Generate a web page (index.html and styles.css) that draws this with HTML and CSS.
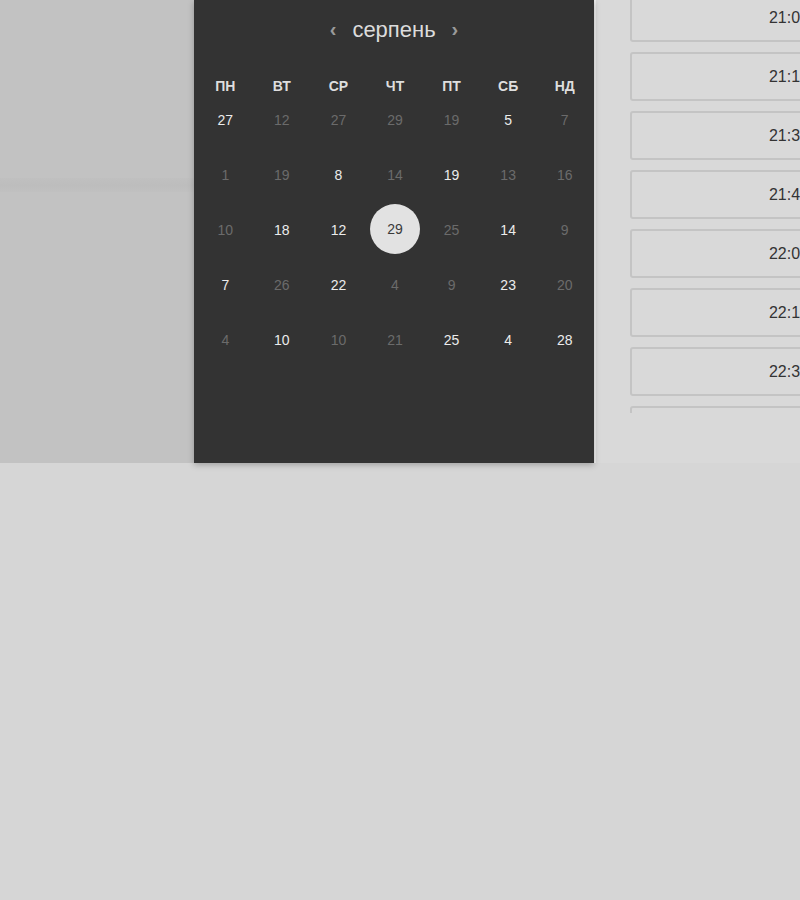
FILE: index.html
```html
<!DOCTYPE html>
<html lang="uk">
<head>
<meta charset="utf-8">
<title>Календар</title>
<link rel="stylesheet" href="styles.css">
</head>
<body>
<div class="top">
  <div class="left"><div class="band"></div></div>
  <div class="calendar">
    <div class="cal-head">
      <span class="chev">‹</span>
      <span class="month">серпень</span>
      <span class="chev">›</span>
    </div>
    <div class="weekdays">
      <span>ПН</span><span>ВТ</span><span>СР</span><span>ЧТ</span><span>ПТ</span><span>СБ</span><span>НД</span>
    </div>
    <div class="dates">
      <span class="on">27</span><span>12</span><span>27</span><span>29</span><span>19</span><span class="on">5</span><span>7</span>
      <span>1</span><span>19</span><span class="on">8</span><span>14</span><span class="on">19</span><span>13</span><span>16</span>
      <span>10</span><span class="on">18</span><span class="on">12</span><span class="sel"><b>29</b></span><span>25</span><span class="on">14</span><span>9</span>
      <span class="on">7</span><span>26</span><span class="on">22</span><span>4</span><span>9</span><span class="on">23</span><span>20</span>
      <span>4</span><span class="on">10</span><span>10</span><span>21</span><span class="on">25</span><span class="on">4</span><span class="on">28</span>
    </div>
  </div>
  <div class="divider"></div>
  <div class="slots-panel">
    <div class="slots">
      <button class="slot">21:00</button>
      <button class="slot">21:15</button>
      <button class="slot">21:30</button>
      <button class="slot">21:45</button>
      <button class="slot">22:00</button>
      <button class="slot">22:15</button>
      <button class="slot">22:30</button>
      <button class="slot">22:45</button>
    </div>
  </div>
</div>
</body>
</html>
```
FILE: styles.css
```css
html, body {
  margin: 0;
  padding: 0;
}
body {
  background: #d6d6d6;
  width: 800px;
  height: 900px;
  overflow: hidden;
  font-family: "Liberation Sans", Arial, sans-serif;
}
.top {
  display: flex;
  height: 463px;
  width: 1000px;
}
.left {
  width: 194px;
  flex: none;
  background: #c2c2c2;
  padding-top: 178px;
  box-sizing: border-box;
}
.band {
  height: 14px;
  background: linear-gradient(#c0c0c0, #bdbdbd 50%, #c0c0c0);
}
.calendar {
  width: 400px;
  flex: none;
  background: #333333;
  box-shadow: 0 2px 6px rgba(0,0,0,0.25);
  position: relative;
  z-index: 1;
}
.cal-head {
  height: 60px;
  display: flex;
  align-items: center;
  justify-content: center;
  gap: 16px;
}
.month {
  color: #dcdcdc;
  font-size: 22px;
}
.chev {
  color: #9a9a9a;
  font-size: 20px;
  font-weight: bold;
  line-height: 1;
  margin-top: -3px;
}
.weekdays {
  display: grid;
  grid-template-columns: repeat(7, 1fr);
  padding: 0 1px 0 3px;
  margin-top: 16px;
  height: 20px;
  align-items: center;
}
.weekdays span {
  text-align: center;
  color: #dedede;
  font-weight: bold;
  font-size: 14px;
}
.dates {
  display: grid;
  grid-template-columns: repeat(7, 1fr);
  grid-auto-rows: 55px;
  padding: 0 1px 0 3px;
  margin-top: -4px;
}
.dates span {
  display: flex;
  align-items: center;
  justify-content: center;
  color: #6b6b6b;
  font-size: 14px;
}
.dates span.on {
  color: #ececec;
}
.dates span.sel b {
  width: 50px;
  height: 50px;
  border-radius: 50%;
  background: #e2e2e2;
  color: #3a3a3a;
  font-weight: normal;
  display: flex;
  align-items: center;
  justify-content: center;
  margin-top: -2px;
}
.divider {
  width: 2px;
  flex: none;
  background: #ececec;
}
.slots-panel {
  flex: 1;
  background: #d9d9d9;
  padding-left: 34px;
  box-sizing: border-box;
}
.slots {
  height: 413px;
  overflow: hidden;
  display: flex;
  flex-direction: column;
  gap: 10px;
}
.slot {
  flex: none;
  width: 318px;
  height: 49px;
  background: #d9d9d9;
  border: 2px solid #c4c4c4;
  border-radius: 3px;
  color: #333;
  font-family: "Liberation Sans", Arial, sans-serif;
  font-size: 16px;
  padding: 0;
}
.slot:first-child {
  margin-top: -7px;
}
```
